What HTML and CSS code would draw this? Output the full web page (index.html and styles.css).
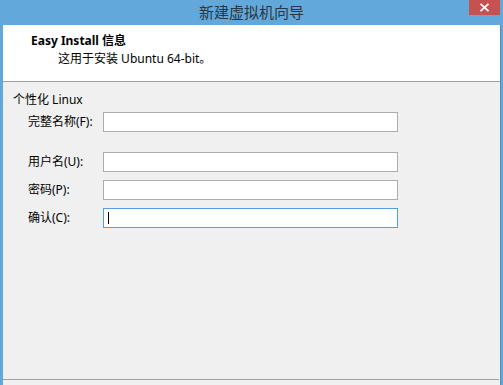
FILE: index.html
```html
<!DOCTYPE html>
<html lang="zh-CN">
<head>
<meta charset="utf-8">
<title>新建虚拟机向导</title>
<link rel="stylesheet" href="styles.css">
</head>
<body>
<div class="window">
  <div class="titlebar">
    <span class="title">新建虚拟机向导</span>
    <div class="close">
      <svg width="11" height="9" viewBox="0 0 11 9"><path d="M1.5 0.8 L9.5 8.2 M9.5 0.8 L1.5 8.2" stroke="#fff" stroke-width="1.8" fill="none"/></svg>
    </div>
  </div>
  <div class="client">
    <div class="header">
      <div class="h-title">Easy Install 信息</div>
      <div class="h-sub">这用于安装 Ubuntu 64-bit。</div>
    </div>
    <div class="body">
      <div class="section">个性化 Linux</div>
      <div class="row first">
        <span class="label">完整名称(F):</span>
        <div class="field"></div>
      </div>
      <div class="row gap-big">
        <span class="label">用户名(U):</span>
        <div class="field"></div>
      </div>
      <div class="row">
        <span class="label">密码(P):</span>
        <div class="field"></div>
      </div>
      <div class="row">
        <span class="label">确认(C):</span>
        <div class="field focused"><span class="caret"></span></div>
      </div>
    </div>
    <div class="footer-line"></div>
  </div>
</div>
</body>
</html>
```

FILE: styles.css
```css
html, body {
  margin: 0;
  padding: 0;
}
body {
  width: 503px;
  height: 385px;
  overflow: hidden;
  font-family: "Noto Sans", "Noto Sans CJK SC", sans-serif;
  font-size: 12px;
  color: #000;
}
.window {
  width: 503px;
  height: 385px;
  background: #63a8da;
  display: flex;
  flex-direction: column;
}
.titlebar {
  position: relative;
  height: 25px;
  flex: none;
  display: flex;
  align-items: center;
  justify-content: center;
}
.title {
  font-family: "Noto Sans CJK SC", sans-serif;
  font-size: 15px;
  line-height: 20px;
  color: #2b3640;
  margin-top: -1px;
}
.close {
  position: absolute;
  top: 0;
  right: 3px;
  width: 31px;
  height: 15px;
  background: #c75050;
  display: flex;
  align-items: center;
  justify-content: center;
}
.client {
  flex: 1;
  margin: 0 2px 0 3px;
  border-right: 1px solid #4f8fc0;
  background: #f0f0f0;
  display: flex;
  flex-direction: column;
}
.header {
  flex: none;
  background: #fff;
  border-bottom: 1px solid #a0a0a0;
  box-sizing: border-box;
  height: 57px;
  padding: 7px 0 0 28px;
}
.h-title {
  font-weight: bold;
  line-height: 18px;
}
.h-sub {
  line-height: 18px;
  padding-left: 27px;
}
.body {
  flex: 1;
  padding: 10px 0 0 10px;
  display: flex;
  flex-direction: column;
}
.section {
  line-height: 16px;
  height: 16px;
}
.row {
  display: flex;
  align-items: center;
  margin-top: 8px;
}
.row.first {
  margin-top: 4px;
}
.row.gap-big {
  margin-top: 20px;
}
.label {
  width: 75px;
  padding-left: 15px;
  line-height: 16px;
}
.field {
  width: 295px;
  height: 20px;
  box-sizing: border-box;
  background: #fff;
  border: 1px solid #abadb3;
  display: flex;
  align-items: center;
  padding-left: 4px;
}
.field.focused {
  border-color: #569de5;
}
.caret {
  width: 1px;
  height: 12px;
  background: #000;
}
.footer-line {
  height: 1px;
  background: #a0a0a0;
  margin: 0 1px 5px 0;
}
```
